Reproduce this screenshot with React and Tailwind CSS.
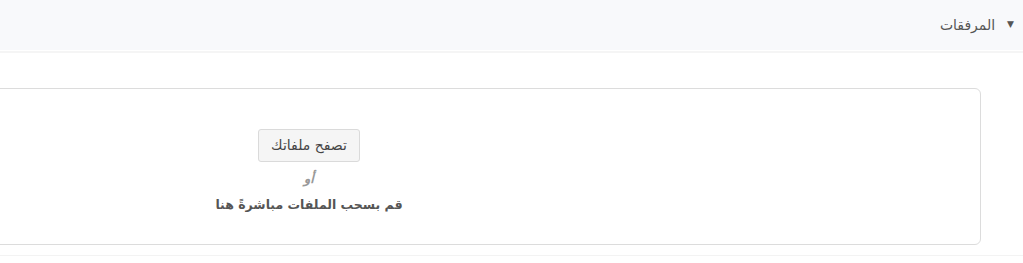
export default function App() {
  const font = { fontFamily: '"DejaVu Sans", "Noto Sans", sans-serif' };
  return (
    <div dir="rtl" className="w-[1023px] h-[263px] overflow-hidden bg-white" style={font}>
      <div className="h-[50px] bg-[#f8f9fb] flex items-center pr-[9px] text-[14px] text-[#555]">
        <span className="text-[9px] ml-[12px]">▼</span>
        <span>المرفقات</span>
      </div>
      <div className="h-[2px] bg-[#f5f5f5] mt-[1px]"></div>
      <div className="pt-[35px]">
        <div className="mr-[42px] w-[1344px] h-[157px] border border-[#dcdcdc] rounded-[6px] flex flex-col items-center pt-[40px]">
          <button className="h-[33px] px-[12px] bg-[#f5f5f5] border border-[#dadada] rounded-[3px] text-[14px] text-[#444]">
            تصفح ملفاتك
          </button>
          <div className="mt-[7px] text-[13px] italic font-bold text-[#999]">أو</div>
          <div className="mt-[7px] text-[12.5px] font-bold text-[#555]">قم بسحب الملفات مباشرةً هنا</div>
        </div>
      </div>
      <div className="h-px bg-[#f3f3f3] mt-[10px]"></div>
    </div>
  );
}
